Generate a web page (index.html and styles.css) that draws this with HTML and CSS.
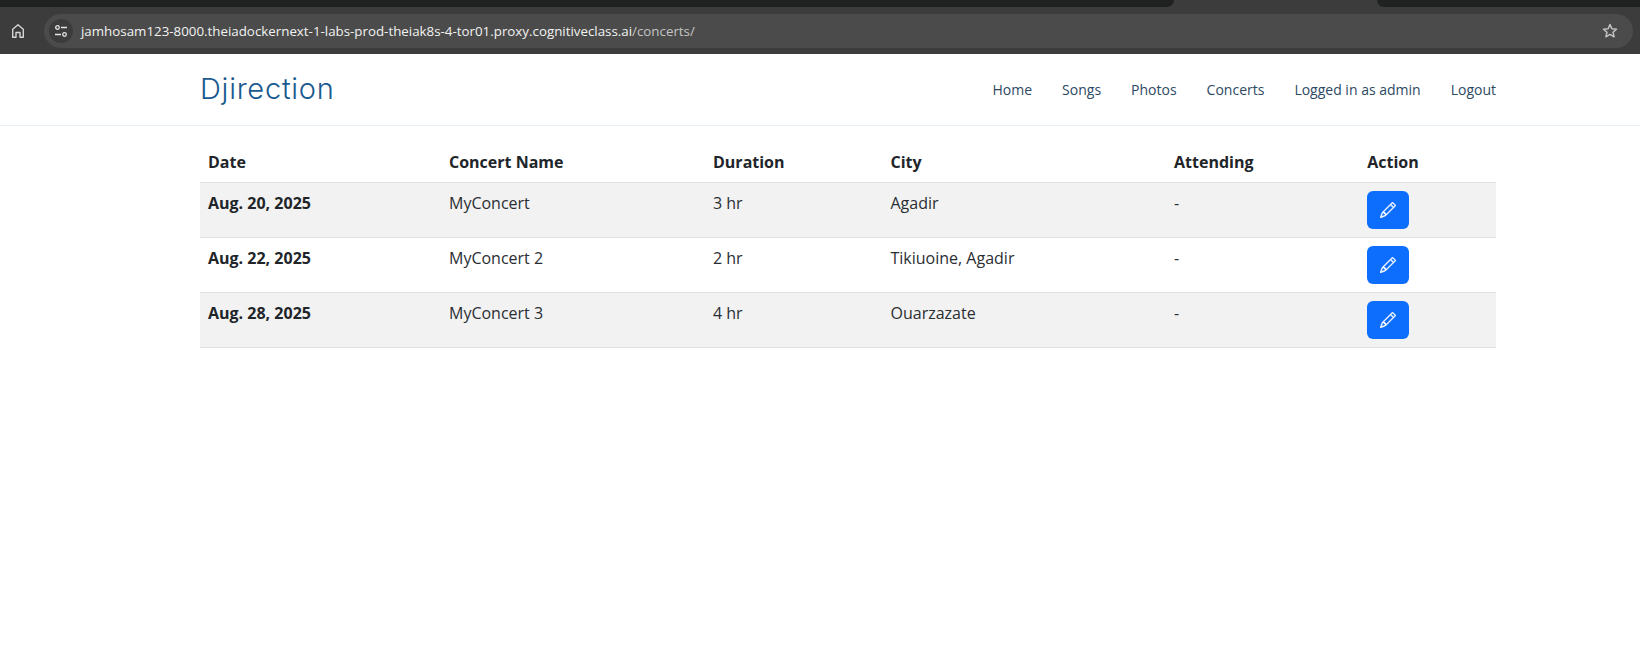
FILE: index.html
```html
<!DOCTYPE html>
<html lang="en">
<head>
<meta charset="utf-8">
<title>Concerts</title>
<link rel="stylesheet" href="styles.css">
</head>
<body>
<div class="chrome">
  <div class="tabstrip">
    <div class="tab-dark tab-left"></div>
    <div class="tab-dark tab-right"></div>
  </div>
  <div class="toolbar">
    <svg class="home" width="16" height="16" viewBox="0 0 16 16" fill="none" stroke="#d4d4d4" stroke-width="1.400"><path d="M2.700 14.300V6.300L8 1.800l5.300 4.500v8h-3.300V9.500H6v4.800z" stroke-linejoin="round"/></svg>
    <div class="omnibox">
      <span class="siteinfo">
        <svg width="14" height="14" viewBox="0 0 14 14" fill="none" stroke="#e4e4e4" stroke-width="1.300"><circle cx="3.500" cy="3.500" r="1.800"/><path d="M7 3.500h6M1 10.500h6"/><circle cx="10.500" cy="10.500" r="1.800"/></svg>
      </span>
      <span class="url">jamhosam123-8000.theiadockernext-1-labs-prod-theiak8s-4-tor01.proxy.cognitiveclass.ai<span class="url-path">/concerts/</span></span>
      <svg class="star" width="16" height="16" viewBox="0 0 16 16" fill="none" stroke="#c4c4c4" stroke-width="1.500"><path d="M8 1.500l1.900 4.300 4.600.4-3.500 3 1.100 4.600L8 11.400l-4.100 2.400L5 9.200l-3.500-3 4.600-.4z" stroke-linejoin="round"/></svg>
    </div>
  </div>
</div>
<header class="site-header">
  <div class="wrap header-inner">
    <a class="logo" href="#">Djirection</a>
    <nav class="nav">
      <a href="#">Home</a>
      <a href="#">Songs</a>
      <a href="#">Photos</a>
      <a href="#">Concerts</a>
      <a href="#">Logged in as admin</a>
      <a href="#">Logout</a>
    </nav>
  </div>
</header>
<main class="wrap main">
  <table class="table">
    <colgroup>
      <col class="c1"><col class="c2"><col class="c3"><col class="c4"><col class="c5"><col class="c6">
    </colgroup>
    <thead>
      <tr><th>Date</th><th>Concert Name</th><th>Duration</th><th>City</th><th>Attending</th><th>Action</th></tr>
    </thead>
    <tbody>
      <tr class="odd">
        <th>Aug. 20, 2025</th><td>MyConcert</td><td>3 hr</td><td>Agadir</td><td>-</td>
        <td><a class="btn" href="#"><svg class="pencil" width="16" height="16" viewBox="0 0 16 16"><path d="M12.146.146a.5.5 0 0 1 .708 0l3 3a.5.5 0 0 1 0 .708l-10 10a.5.5 0 0 1-.168.11l-5 2a.5.5 0 0 1-.65-.65l2-5a.5.5 0 0 1 .11-.168zM11.207 2.500 13.500 4.793 14.793 3.500 12.500 1.207zm1.586 3L10.500 3.207 4 9.707V10h.5a.5.5 0 0 1 .5.5v.5h.5a.5.5 0 0 1 .5.500v.5h.293zm-9.761 5.175-.106.106-1.528 3.821 3.821-1.528.106-.106A.5.5 0 0 1 5 12.500V12h-.5a.5.5 0 0 1-.5-.5V11h-.5a.5.5 0 0 1-.468-.325"/></svg></a></td>
      </tr>
      <tr>
        <th>Aug. 22, 2025</th><td>MyConcert 2</td><td>2 hr</td><td>Tikiuoine, Agadir</td><td>-</td>
        <td><a class="btn" href="#"><svg class="pencil" width="16" height="16" viewBox="0 0 16 16"><path d="M12.146.146a.5.5 0 0 1 .708 0l3 3a.5.5 0 0 1 0 .708l-10 10a.5.5 0 0 1-.168.11l-5 2a.5.5 0 0 1-.65-.65l2-5a.5.5 0 0 1 .11-.168zM11.207 2.500 13.500 4.793 14.793 3.500 12.500 1.207zm1.586 3L10.500 3.207 4 9.707V10h.5a.5.5 0 0 1 .5.5v.5h.5a.5.5 0 0 1 .5.500v.5h.293zm-9.761 5.175-.106.106-1.528 3.821 3.821-1.528.106-.106A.5.5 0 0 1 5 12.500V12h-.5a.5.5 0 0 1-.5-.5V11h-.5a.5.5 0 0 1-.468-.325"/></svg></a></td>
      </tr>
      <tr class="odd">
        <th>Aug. 28, 2025</th><td>MyConcert 3</td><td>4 hr</td><td>Ouarzazate</td><td>-</td>
        <td><a class="btn" href="#"><svg class="pencil" width="16" height="16" viewBox="0 0 16 16"><path d="M12.146.146a.5.5 0 0 1 .708 0l3 3a.5.5 0 0 1 0 .708l-10 10a.5.5 0 0 1-.168.11l-5 2a.5.5 0 0 1-.65-.65l2-5a.5.5 0 0 1 .11-.168zM11.207 2.500 13.500 4.793 14.793 3.500 12.500 1.207zm1.586 3L10.500 3.207 4 9.707V10h.5a.5.5 0 0 1 .5.5v.5h.5a.5.5 0 0 1 .5.500v.5h.293zm-9.761 5.175-.106.106-1.528 3.821 3.821-1.528.106-.106A.5.5 0 0 1 5 12.500V12h-.5a.5.5 0 0 1-.5-.5V11h-.5a.5.5 0 0 1-.468-.325"/></svg></a></td>
      </tr>
    </tbody>
  </table>
</main>
</body>
</html>
```
FILE: styles.css
```css
* { box-sizing: border-box; }
html, body { margin: 0; padding: 0; background: #fff; }
body { font-family: "Open Sans", "Liberation Sans", sans-serif; font-size: 16px; line-height: 24px; color: #212529; overflow: hidden; }
a { text-decoration: none; }

.chrome { height: 54px; background: #3c3c3c; }
.tabstrip { height: 7px; display: flex; justify-content: space-between; }
.tab-dark { height: 7px; background: #202221; }
.tab-left { width: 1174px; border-bottom-right-radius: 8px; }
.tab-right { width: 263px; border-bottom-left-radius: 8px; }
.toolbar { height: 47px; display: flex; align-items: center; padding: 0 7px 0 10px; gap: 18px; }
.home { flex: none; }
.omnibox { flex: 1; height: 34px; border-radius: 17px; background: #4b4b4b; display: flex; align-items: center; padding: 0 15px 0 5px; }
.siteinfo { width: 24px; height: 24px; border-radius: 50%; background: #3c3c3c; display: flex; align-items: center; justify-content: center; flex: none; }
.url { margin-left: 8px; flex: 1; font-family: "Open Sans", sans-serif; font-size: 13.330px; color: #f2f2f2; white-space: nowrap; }
.url-path { color: #c4c4c4; }
.star { flex: none; }

.site-header { height: 72px; border-bottom: 1px solid #e9f0f5; }
.wrap { margin-left: 200px; width: 1296px; }
.header-inner { height: 71px; display: flex; align-items: center; justify-content: space-between; }
.logo { font-family: Inter, "Open Sans", sans-serif; font-weight: 300; font-size: 29px; line-height: 36px; letter-spacing: 0.75px; color: #1a5a8f; margin-top: -2px; }
.nav { display: flex; gap: 30px; }
.nav a { font-size: 14px; line-height: 21px; color: #2c4964; }

.main { padding-top: 16px; }
.table { width: 100%; border-collapse: collapse; table-layout: fixed; }
.c1 { width: 241px; }
.c2 { width: 264px; }
.c3 { width: 177.500px; }
.c4 { width: 283.500px; }
.c5 { width: 193.250px; }
.c6 { width: 136.750px; }
.table th, .table td { padding: 8px; text-align: left; vertical-align: top; border-bottom: 1px solid #dee2e6; }
.table th { font-weight: 700; }
.table td { color: #2a2e33; }
.odd th, .odd td { background: #f2f2f2; }
.btn { display: flex; align-items: center; justify-content: center; width: 42px; height: 38px; background: #0d6efd; border-radius: 6px; }
.pencil { fill: #fff; stroke: #fff; stroke-width: 0.35; }
```
